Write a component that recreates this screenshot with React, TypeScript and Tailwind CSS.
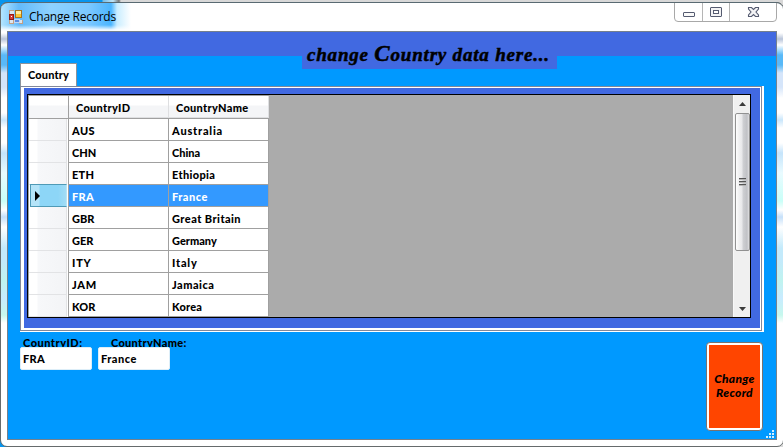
import React from 'react';

const rows = [
  ['AUS', 'Australia', 'tracking-[0.8px]', 'tracking-[0.4px]'],
  ['CHN', 'China', 'tracking-[0px]', 'tracking-[0px]'],
  ['ETH', 'Ethiopia', 'tracking-[0.35px]', 'tracking-[0.3px]'],
  ['FRA', 'France', 'tracking-[0.5px]', 'tracking-[0.3px]'],
  ['GBR', 'Great Britain', 'tracking-[0.45px]', 'tracking-[0px]'],
  ['GER', 'Germany', 'tracking-[0px]', 'tracking-[0px]'],
  ['ITY', 'Italy', 'tracking-[0.8px]', 'tracking-[0.8px]'],
  ['JAM', 'Jamaica', 'tracking-[0.5px]', 'tracking-[0.7px]'],
  ['KOR', 'Korea', 'tracking-[0.2px]', 'tracking-[0px]'],
];

function AppIcon() {
  return (
    <svg width="14" height="14" viewBox="0 0 14 14" shapeRendering="crispEdges">
      <path d="M0 0h5v4H0zM0 10h4v4H0zM10 10h4v4h-4z" fill="#dce5ef" />
      <path d="M.5 4V.5H5M.5 10v3.500H4M4.500 10v4M10.500 10v3.500h3V10" fill="none" stroke="#c4a083" />
      <rect x="6.500" y=".5" width="6" height="7" fill="#f9c634" stroke="#a8731d" />
      <path d="M7 1h5v3H7z" fill="#ffe9a0" />
      <rect x=".5" y="4.500" width="4" height="5" fill="#d63e36" stroke="#8f1a18" />
      <path d="M2 6h1v1H2z" fill="#fff" />
      <rect x="5.500" y="9.500" width="5" height="3" fill="#5b8de0" stroke="#bed6f6" />
    </svg>
  );
}

function WindowButtons() {
  return (
    <svg className="ml-auto mr-[6px] shrink-0" width="103" height="20" viewBox="0 0 103 20">
      <path d="M.5 0v15q0 3.500 3.500 3.500h95q3.500 0 3.500-3.500V0" fill="#fff" stroke="#a8a8a8" />
      <path d="M28.500 0v18M55.500 0v18" stroke="#b5b5b5" />
      <rect x="9.500" y="9.500" width="11" height="4" rx=".5" fill="#fafafa" stroke="#555b70" />
      <rect x="36.500" y="4.500" width="11" height="9" rx=".5" fill="#f3f3f5" stroke="#555b70" />
      <rect x="39.500" y="7.500" width="5" height="3" fill="#fff" stroke="#555b70" />
      <path d="M74.500 4.500h3l2 2 2-2h3v1.500l-2.500 3 2.500 3v1.500h-3l-2-2-2 2h-3v-1.500l2.500-3-2.500-3z" fill="#f3f3f5" stroke="#555b70" strokeWidth="1.100" />
    </svg>
  );
}

function ScrollBar() {
  return (
    <div className="ml-auto flex w-[17px] flex-col items-center border-l border-[#f8f8f8] bg-[#f0f0f0]">
      <svg width="16" height="18" viewBox="0 0 16 18">
        <path d="M5 11l3.500-4 3.500 4z" fill="#3b3b3b" />
      </svg>
      <div className="flex h-[138px] w-[15px] flex-col items-center justify-center gap-[1px] rounded-[2px] border border-[#919191] bg-[linear-gradient(90deg,#fff_0px,#f4f4f4_2px,#e8e8ea_6px,#cfd0d3_7px,#c0c1c5_11px,#e0e0e2_13px)]">
        <div className="h-[2px] w-[7px] border-t border-[#555] bg-[#b5b5b5]" />
        <div className="h-[2px] w-[7px] border-t border-[#555] bg-[#b5b5b5]" />
        <div className="h-[2px] w-[7px] border-t border-[#555] bg-[#b5b5b5]" />
      </div>
      <svg className="mt-auto" width="16" height="17" viewBox="0 0 16 17">
        <path d="M5 7h7l-3.500 4z" fill="#3b3b3b" />
      </svg>
    </div>
  );
}

function DataGrid() {
  return (
    <div className="flex h-[224px] w-[724px] overflow-hidden border border-black bg-[#ababab]">
      <div className="w-[241px] border-l border-[#a0a0a0]">
        <div className="flex h-[24px] border-t border-b border-[#a0a0a0] bg-white">
          <div className="w-[40px] border-r border-[#a0a0a0] bg-[linear-gradient(#fff_9px,#f5f6f8_10px)]" />
          <div className="w-[100px] whitespace-nowrap border-r border-b border-[#dedfe1] bg-[linear-gradient(#fff_9px,#f4f5f7_10px)] pl-[7px] leading-[23px] tracking-[0.3px]">CountryID</div>
          <div className="w-[100px] whitespace-nowrap border-r border-b border-[#dedfe1] bg-[linear-gradient(#fff_9px,#f4f5f7_10px)] pl-[7px] leading-[23px] tracking-[0.3px]">CountryName</div>
        </div>
        {rows.map(([id, name, tracking, idTracking]) => {
          const selected = id === 'FRA';
          return (
            <div key={id} className="flex h-[22px]">
              <div className="w-[40px] border-r border-[#a0a0a0] bg-white">
                {selected ? (
                  <div className="-mt-px ml-px flex h-[23px] w-[37px] items-center border border-[#4f9ab6] border-r-[#b6e4f5] bg-[linear-gradient(90deg,#b5e4f8_8px,#8dd6f7_9px,#8dd6f7_27px,#a1dcf5)] pl-[4px]">
                    <svg width="6" height="10" viewBox="0 0 6 10"><path d="M0 0l5 5-5 5z" fill="#000" /></svg>
                  </div>
                ) : (
                  <div className="h-[22px] w-[38px] border-r border-b border-[#e2e3e5] bg-[linear-gradient(90deg,#fff_8px,#f7f8fa_9px,#f3f4f6)]" />
                )}
              </div>
              <div className={`w-[100px] border-r border-b border-[#a0a0a0] pl-[3px] leading-[24px] ${idTracking} ${selected ? 'bg-[#3399ff] text-white' : 'bg-white'}`}>{id}</div>
              <div className={`w-[100px] whitespace-nowrap border-r border-b border-[#a0a0a0] pl-[3px] leading-[24px] ${tracking} ${selected ? 'bg-[#3399ff] text-white' : 'bg-white'}`}>{name}</div>
            </div>
          );
        })}
      </div>
      <ScrollBar />
    </div>
  );
}

function SizeGrip() {
  return (
    <svg className="self-end" width="9" height="9" viewBox="0 0 9 9" shapeRendering="crispEdges">
      <path d="M6 1h2M3 4h2M6 4h2M0 7h2M3 7h2M6 7h2" stroke="#d3edff" strokeWidth="2" />
    </svg>
  );
}

export default function App() {
  return (
    <div className="h-[447px] w-[783px] overflow-hidden bg-[linear-gradient(90deg,#0795ee_102px,#76bce6_103px,#bfe4f7_113px,#777_119px,#d8d8d8_121px)] pt-[2px] font-['Lato','Open_Sans',sans-serif] text-[11px] font-black text-black">
      <div className="h-[445px] w-[784px] rounded-[7px] border border-[#666b6c] bg-[linear-gradient(90deg,transparent_7px,#fff_8px,#fff_774px,transparent_775px),linear-gradient(#fff_30px,#b9c5da_36px,#fff_42px,#58b9f8_52px,#58b9f8_62px,#d5e5fa_70px,#d5e5fa_84px,#fff_95px,#fff_110px,#c9e6fb_117px,#fff_125px,#fff_140px,#c5e4fb_150px,#e9fbff_170px,#c9fff8_198px,#fff_207px,#c5e0fa_214px,#fff_224px,#c3eafb_245px,#c3eafb_258px,#bff3ef_278px,#c8ebff_295px,#c6f8ed_312px,#fff_320px,#fff)]">
        <div className="-mt-px flex h-[29px] rounded-t-[7px] border-t border-[#596a72] bg-[linear-gradient(transparent_22px,#fffffff0_27px),linear-gradient(90deg,#b3e5ff,#63bafa_18px,#8ed2ff_50px,#7bc8ff_88px,#4ab5ff_110px,#c9edff_116px,#fff_130px,#fff)]">
          <div className="flex h-[28px] items-center pl-[8px]">
            <AppIcon />
            <span className="ml-[6px] font-['Open_Sans','Noto_Sans',sans-serif] text-[12px] font-normal tracking-[-0.25px]">Change Records</span>
          </div>
          <WindowButtons />
        </div>
        <div className="ml-[6px] h-[409px] w-[770px] border border-[#75818d] bg-[#0099ff]">
          <div className="h-[24px] bg-[#4169e1] pl-[294px] pt-[10px]">
            <h1 className="h-[27px] w-[255px] whitespace-nowrap bg-[#4169e1] pl-[5px] font-['Liberation_Serif',serif] text-[19px] font-bold italic leading-[25px] tracking-[0.8px] [-webkit-text-stroke:0.5px_black]">change <span className="text-[23px] leading-[20px]">C</span>ountry data here...</h1>
          </div>
          <div className="ml-[12px] mt-[7px]">
            <div className="h-[23px] w-[57px] border border-b-0 border-[#8b929b] bg-white pl-[7px] leading-[22px] tracking-[0.15px]">Country</div>
            <div className="h-[246px] w-[744px] border-r-2 border-b border-white">
              <div className="h-[245px] w-[742px] border border-[#81889b] bg-white pb-[2px] pl-[3px] pr-px pt-px">
                <div className="h-[240px] bg-[#4169e1] pl-[3px] pt-[6px]"><DataGrid /></div>
              </div>
            </div>
          </div>
          <div className="ml-[12px] mt-[4px] flex h-[103px] w-[755px]">
            <div>
              <div className="flex h-[11px] leading-[13px]">
                <span className="w-[88px] pl-[3px] tracking-[0.5px]">CountryID:</span>
                <span className="pl-[3px] tracking-[0.3px]">CountryName:</span>
              </div>
              <div className="relative flex gap-[6px]">
                <input className="h-[23px] w-[72px] rounded-[2px] border border-[#ddeef8] bg-white pb-px pl-[2px] pt-[1px] tracking-[0.3px] outline-none" defaultValue="FRA" />
                <input className="h-[23px] w-[72px] rounded-[2px] border border-[#ddeef8] bg-white pb-px pl-[2px] pt-[1px] tracking-[0.5px] outline-none" defaultValue="France" />
              </div>
            </div>
            <button className="ml-auto mt-[6px] h-[89px] w-[57px] whitespace-nowrap rounded-[4px] border border-[#78716f] bg-white p-[2px]">
              <span className="flex h-full items-center justify-center bg-[#ff4500] pb-[2px] text-center text-[12px] font-black italic leading-[14px] tracking-[0.3px]">Change<br />Record</span>
            </button>
            <div className="ml-[3px] flex w-[9px]"><SizeGrip /></div>
          </div>
        </div>
      </div>
    </div>
  );
}
